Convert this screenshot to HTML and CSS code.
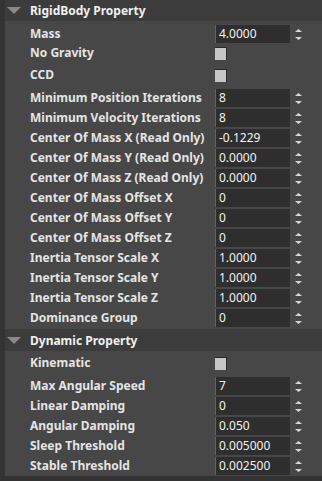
FILE: index.html
```html
<!DOCTYPE html>
<html lang="en">
<head>
  <meta charset="UTF-8">
  <title>RigidBody Inspector</title>
  <link rel="stylesheet" href="styles.css">
</head>
<body>
  <div class="panel">
    <section class="group first">
      <div class="group-head"><span class="caret"></span>RigidBody Property</div>
      <div class="group-body">
        <div class="row"><span class="label">Mass</span><span class="field">4.0000</span><svg class="spin" width="7" height="11" viewBox="0 0 7 11"><polygon points="3.5,0 7,3 0,3"/><polygon points="0,8 7,8 3.5,11"/></svg></div>
        <div class="row check"><span class="label">No Gravity</span><span class="box"></span></div>
        <div class="row check"><span class="label">CCD</span><span class="box"></span></div>
        <div class="row"><span class="label">Minimum Position Iterations</span><span class="field">8</span><svg class="spin" width="7" height="11" viewBox="0 0 7 11"><polygon points="3.5,0 7,3 0,3"/><polygon points="0,8 7,8 3.5,11"/></svg></div>
        <div class="row"><span class="label">Minimum Velocity Iterations</span><span class="field">8</span><svg class="spin" width="7" height="11" viewBox="0 0 7 11"><polygon points="3.5,0 7,3 0,3"/><polygon points="0,8 7,8 3.5,11"/></svg></div>
        <div class="row"><span class="label">Center Of Mass X (Read Only)</span><span class="field">-0.1229</span><svg class="spin" width="7" height="11" viewBox="0 0 7 11"><polygon points="3.5,0 7,3 0,3"/><polygon points="0,8 7,8 3.5,11"/></svg></div>
        <div class="row"><span class="label">Center Of Mass Y (Read Only)</span><span class="field">0.0000</span><svg class="spin" width="7" height="11" viewBox="0 0 7 11"><polygon points="3.5,0 7,3 0,3"/><polygon points="0,8 7,8 3.5,11"/></svg></div>
        <div class="row"><span class="label">Center Of Mass Z (Read Only)</span><span class="field">0.0000</span><svg class="spin" width="7" height="11" viewBox="0 0 7 11"><polygon points="3.5,0 7,3 0,3"/><polygon points="0,8 7,8 3.5,11"/></svg></div>
        <div class="row"><span class="label">Center Of Mass Offset X</span><span class="field">0</span><svg class="spin" width="7" height="11" viewBox="0 0 7 11"><polygon points="3.5,0 7,3 0,3"/><polygon points="0,8 7,8 3.5,11"/></svg></div>
        <div class="row"><span class="label">Center Of Mass Offset Y</span><span class="field">0</span><svg class="spin" width="7" height="11" viewBox="0 0 7 11"><polygon points="3.5,0 7,3 0,3"/><polygon points="0,8 7,8 3.5,11"/></svg></div>
        <div class="row"><span class="label">Center Of Mass Offset Z</span><span class="field">0</span><svg class="spin" width="7" height="11" viewBox="0 0 7 11"><polygon points="3.5,0 7,3 0,3"/><polygon points="0,8 7,8 3.5,11"/></svg></div>
        <div class="row"><span class="label">Inertia Tensor Scale X</span><span class="field">1.0000</span><svg class="spin" width="7" height="11" viewBox="0 0 7 11"><polygon points="3.5,0 7,3 0,3"/><polygon points="0,8 7,8 3.5,11"/></svg></div>
        <div class="row"><span class="label">Inertia Tensor Scale Y</span><span class="field">1.0000</span><svg class="spin" width="7" height="11" viewBox="0 0 7 11"><polygon points="3.5,0 7,3 0,3"/><polygon points="0,8 7,8 3.5,11"/></svg></div>
        <div class="row"><span class="label">Inertia Tensor Scale Z</span><span class="field">1.0000</span><svg class="spin" width="7" height="11" viewBox="0 0 7 11"><polygon points="3.5,0 7,3 0,3"/><polygon points="0,8 7,8 3.5,11"/></svg></div>
        <div class="row"><span class="label">Dominance Group</span><span class="field">0</span><svg class="spin" width="7" height="11" viewBox="0 0 7 11"><polygon points="3.5,0 7,3 0,3"/><polygon points="0,8 7,8 3.5,11"/></svg></div>
      </div>
    </section>
    <section class="group">
      <div class="group-head"><span class="caret"></span>Dynamic Property</div>
      <div class="group-body">
        <div class="row check"><span class="label">Kinematic</span><span class="box"></span></div>
        <div class="row"><span class="label">Max Angular Speed</span><span class="field">7</span><svg class="spin" width="7" height="11" viewBox="0 0 7 11"><polygon points="3.5,0 7,3 0,3"/><polygon points="0,8 7,8 3.5,11"/></svg></div>
        <div class="row"><span class="label">Linear Damping</span><span class="field">0</span><svg class="spin" width="7" height="11" viewBox="0 0 7 11"><polygon points="3.5,0 7,3 0,3"/><polygon points="0,8 7,8 3.5,11"/></svg></div>
        <div class="row"><span class="label">Angular Damping</span><span class="field">0.050</span><svg class="spin" width="7" height="11" viewBox="0 0 7 11"><polygon points="3.5,0 7,3 0,3"/><polygon points="0,8 7,8 3.5,11"/></svg></div>
        <div class="row"><span class="label">Sleep Threshold</span><span class="field">0.005000</span><svg class="spin" width="7" height="11" viewBox="0 0 7 11"><polygon points="3.5,0 7,3 0,3"/><polygon points="0,8 7,8 3.5,11"/></svg></div>
        <div class="row"><span class="label">Stable Threshold</span><span class="field">0.002500</span><svg class="spin" width="7" height="11" viewBox="0 0 7 11"><polygon points="3.5,0 7,3 0,3"/><polygon points="0,8 7,8 3.5,11"/></svg></div>
      </div>
    </section>
  </div>
</body>
</html>
```

FILE: styles.css
```css
html, body {
  margin: 0;
  padding: 0;
  background-color: #333333;
  height: 100%;
  overflow: hidden;
}

body {
  font-family: "Noto Sans", sans-serif;
  font-size: 12px;
  color: #e4e4e4;
}

.panel {
  margin-left: 5px;
}

.group {
  background-color: #474747;
}

.group.first {
  margin-top: -1px;
  padding-bottom: 1px;
}

.group-head {
  display: flex;
  align-items: center;
  height: 22px;
  background-color: #3c3c3c;
  font-weight: bold;
  color: #f0f0f0;
}

.caret {
  width: 0;
  height: 0;
  border-left: 7px solid transparent;
  border-right: 7px solid transparent;
  border-top: 7px solid #8a8a8a;
  margin-left: 2px;
  margin-right: 9px;
}

.group-body {
  padding-top: 3px;
}

.row {
  display: flex;
  align-items: center;
  height: 20px;
  padding-left: 25px;
}

.row.check {
  height: 22px;
  align-items: flex-start;
}

.label {
  width: 185px;
  flex-shrink: 0;
  font-weight: bold;
  white-space: nowrap;
  line-height: 18px;
}

.field {
  box-sizing: border-box;
  width: 75px;
  height: 18px;
  line-height: 18px;
  padding-left: 3px;
  background-color: #2e2e2e;
  border-left: 1px solid #626262;
  color: #f2f2f2;
}

.spin {
  margin-left: 5px;
  fill: #d8d8d8;
}

.box {
  box-sizing: border-box;
  width: 12px;
  height: 13px;
  margin-top: 3px;
  background-color: #c6c6c6;
  border-top: 1px solid #2a2a2a;
  border-right: 1px solid #2a2a2a;
}
```
